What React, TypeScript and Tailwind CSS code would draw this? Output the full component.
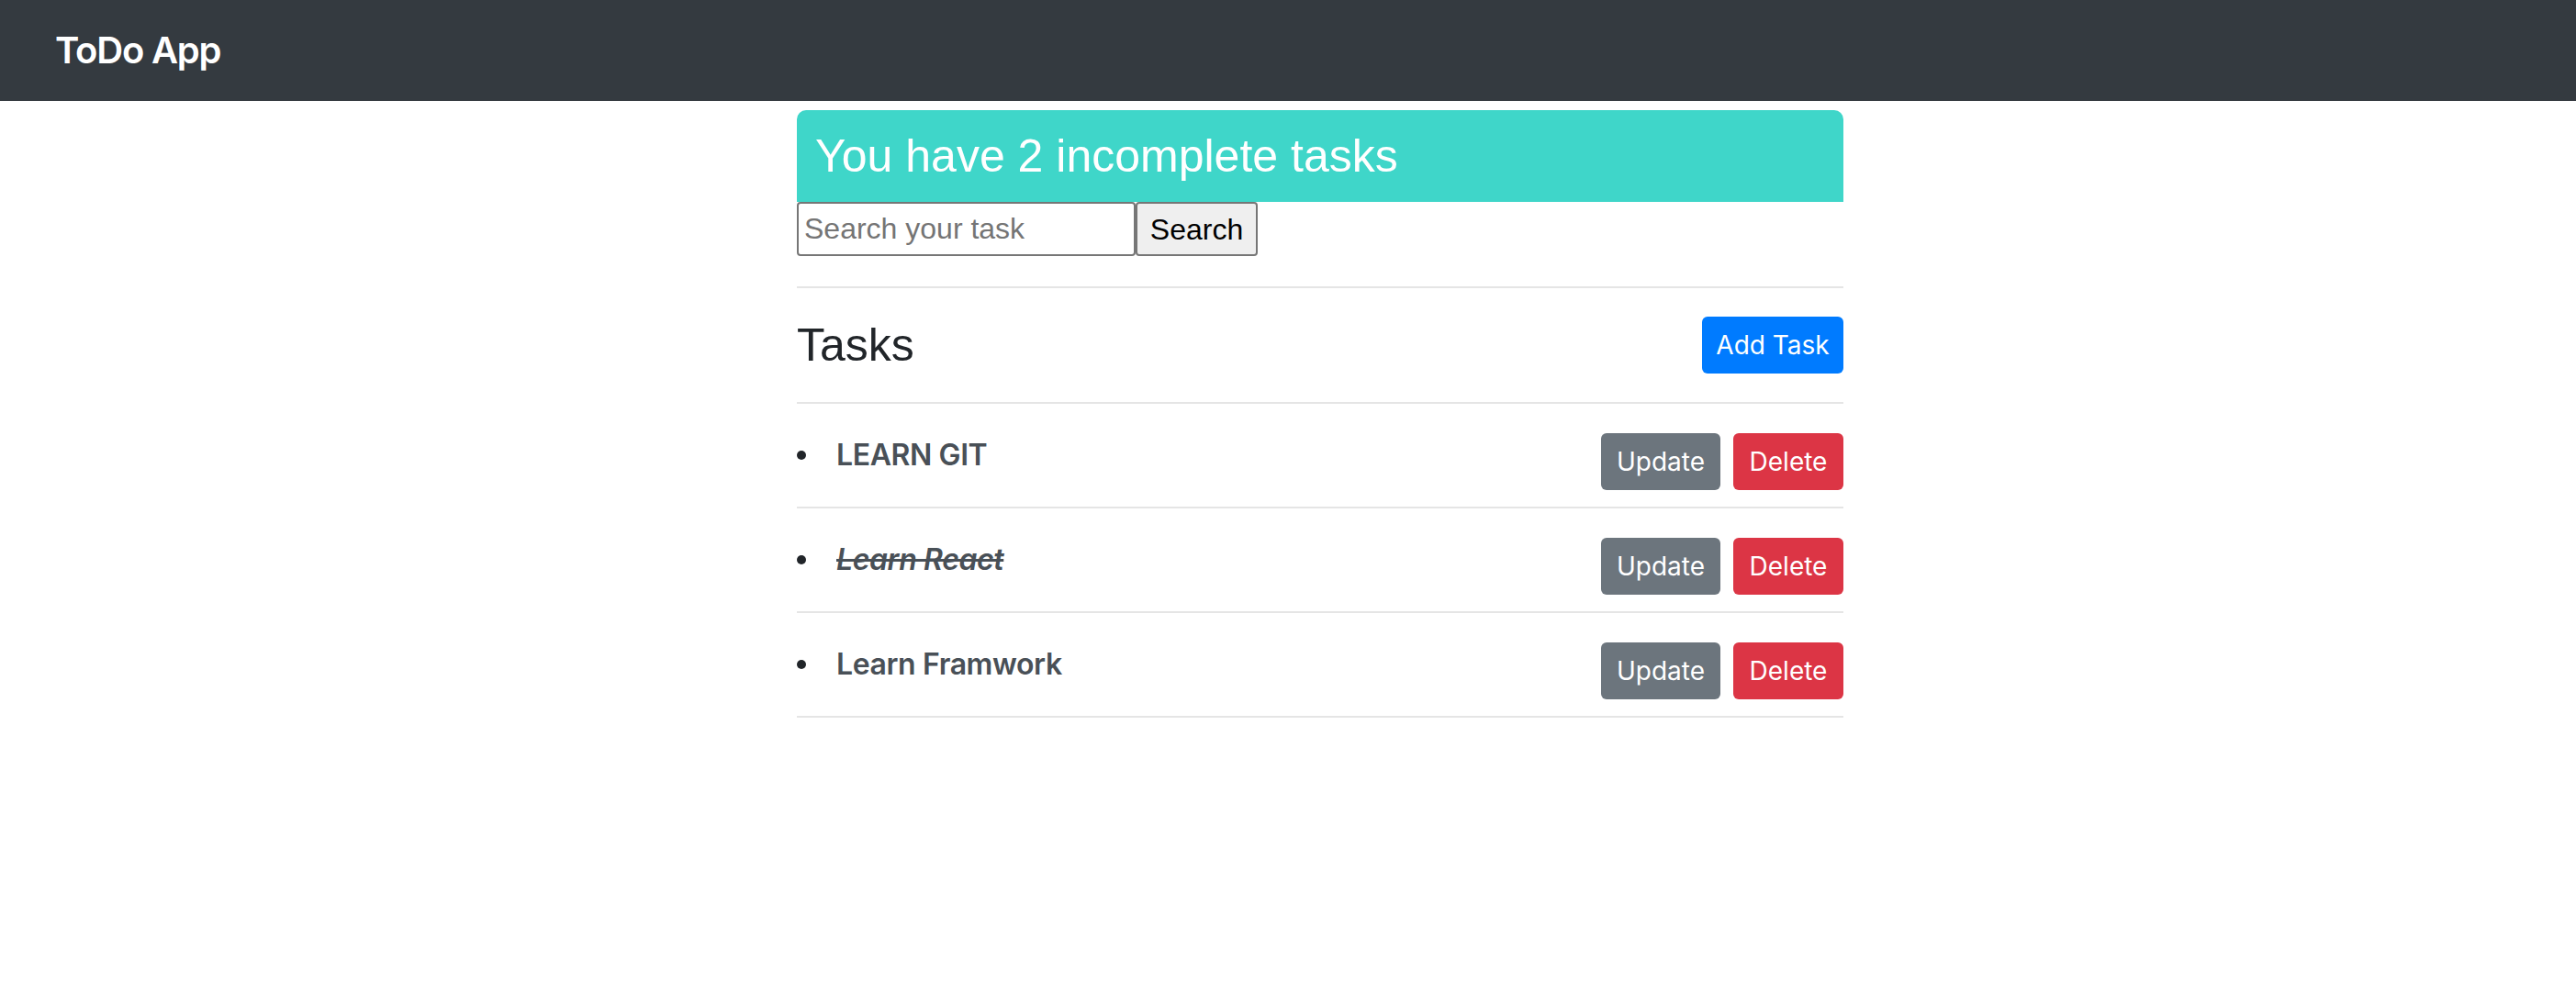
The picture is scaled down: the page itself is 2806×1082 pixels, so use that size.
import React from 'react';

interface Task {
  id: number;
  title: string;
  done: boolean;
}

const tasks: Task[] = [
  { id: 1, title: 'LEARN GIT', done: false },
  { id: 2, title: 'Learn React', done: true },
  { id: 3, title: 'Learn Framwork', done: false },
];

const sf = { fontFamily: 'Inter, "Noto Sans", sans-serif' };

const TaskRow: React.FC<{ task: Task }> = ({ task }) => (
  <li className="flex h-[114px] items-center justify-between border-b-2 border-[#e5e5e5]">
    <div className="flex items-center">
      <span className="h-[10px] w-[10px] rounded-full bg-[#212529]" />
      <span
        className={`ml-[33px] text-[32px] font-semibold tracking-[-0.4px] text-[#495057] ${task.done ? 'italic line-through' : ''}`}
        style={sf}
      >
        {task.title}
      </span>
    </div>
    <div className="mt-[14px] flex gap-[14px]" style={sf}>
      <button className="h-[62px] w-[130px] rounded-[6px] bg-[#6c757d] text-[28px] text-white">Update</button>
      <button className="h-[62px] w-[120px] rounded-[6px] bg-[#dc3545] text-[28px] text-white">Delete</button>
    </div>
  </li>
);

const App: React.FC = () => {
  const incomplete = tasks.filter((t) => !t.done).length;

  return (
    <div className="min-h-[1082px] bg-white" style={{ fontFamily: '"Liberation Sans", Arial, sans-serif' }}>
      <nav className="flex h-[110px] items-center bg-[#343a40] pl-[60px]">
        <span className="text-[40px] font-semibold tracking-[-1.2px] text-white" style={sf}>
          ToDo App
        </span>
      </nav>

      <main className="ml-[868px] w-[1140px] pt-[10px]">
        <div className="flex h-[100px] items-center rounded-t-[10px] bg-[#3fd6c9] pl-[20px]">
          <h2 className="text-[50px] text-white">You have {incomplete} incomplete tasks</h2>
        </div>

        <div className="flex">
          <input
            className="h-[59px] w-[369px] rounded-[4px] border-2 border-[#767676] bg-white px-[6px] text-[32px] text-black placeholder:text-[#757575]"
            placeholder="Search your task"
          />
          <button className="h-[59px] w-[133px] rounded-[4px] border-2 border-[#767676] bg-[#efefef] text-[32px] text-black">
            Search
          </button>
        </div>

        <div className="mt-[33px] flex h-[128px] items-center justify-between border-y-2 border-[#e5e5e5]">
          <h3 className="text-[50px] text-[#212529]">Tasks</h3>
          <button
            className="h-[62px] w-[154px] rounded-[6px] bg-[#007bff] text-[28px] text-white"
            style={sf}
          >
            Add Task
          </button>
        </div>

        <ul>
          {tasks.map((task) => (
            <TaskRow key={task.id} task={task} />
          ))}
        </ul>
      </main>
    </div>
  );
};

export default App;
